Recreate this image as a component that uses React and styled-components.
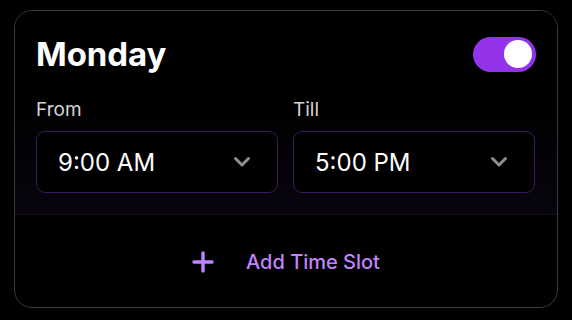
import React, { useState } from "react";
import styled, { createGlobalStyle } from "styled-components";

const Global = createGlobalStyle`
  html, body { margin: 0; padding: 0; background: #000; }
  body { font-family: Inter, "Noto Sans", sans-serif; -webkit-font-smoothing: antialiased; }
`;

const Page = styled.div`
  width: 572px;
  height: 320px;
  padding: 10px 14px 12px 14px;
  box-sizing: border-box;
  background: #000;
`;

const Card = styled.div`
  height: 100%;
  box-sizing: border-box;
  border: 1px solid #3b3a42;
  border-radius: 18px;
  overflow: hidden;
  display: flex;
  flex-direction: column;
  background: #000;
`;

const Top = styled.div`
  padding: 25px 22px 21px 21px;
  background: linear-gradient(180deg, #000 0%, #000 45%, #08040e 100%);
  border-bottom: 1px dotted #2a1a3a;
  display: flex;
  flex-direction: column;
`;

const Header = styled.div`
  display: flex;
  align-items: center;
  justify-content: space-between;
  height: 36px;
`;

const Title = styled.h1`
  margin: 0;
  color: #fff;
  font-size: 33px;
  line-height: 36px;
  font-weight: 700;
  letter-spacing: -0.1px;
`;

const Switch = styled.button`
  width: 63px;
  height: 35px;
  border-radius: 18px;
  border: none;
  padding: 0 4px;
  margin-right: -1px;
  background: ${p => (p.$on ? "#9333ea" : "#3f3f46")};
  display: flex;
  align-items: center;
  justify-content: ${p => (p.$on ? "flex-end" : "flex-start")};
  cursor: pointer;
`;

const Knob = styled.span`
  width: 28px;
  height: 28px;
  border-radius: 50%;
  background: #fff;
`;

const Fields = styled.div`
  display: grid;
  grid-template-columns: 1fr 1fr;
  column-gap: 15px;
  margin-top: 27px;
`;

const Field = styled.div`
  display: flex;
  flex-direction: column;
`;

const Label = styled.div`
  color: #d4d4d8;
  font-size: 19px;
  line-height: 22px;
  margin-bottom: 10px;
`;

const Select = styled.div`
  height: 62px;
  box-sizing: border-box;
  border: 1px solid #3a1c5e;
  border-radius: 9px;
  background: #000;
  display: flex;
  align-items: center;
  justify-content: space-between;
  padding: 0 26px 0 21px;
  color: #fff;
  font-size: 24px;
  font-weight: 400;
`;

const Bottom = styled.div`
  flex: 1;
  display: flex;
  align-items: center;
  justify-content: center;
  gap: 32px;
  padding-top: 2px;
`;

const AddText = styled.span`
  color: #c084fc;
  font-size: 20px;
  font-weight: 500;
`;

const Chevron = () => (
  <svg width="18" height="12" viewBox="0 0 18 12" fill="none">
    <path d="M2.5 2.5 L9 9 L15.5 2.5" stroke="#8e8e93" strokeWidth="3" strokeLinecap="round" strokeLinejoin="round" />
  </svg>
);

const Plus = () => (
  <svg width="22" height="22" viewBox="0 0 22 22" fill="none">
    <path d="M11 2 V20 M2 11 H20" stroke="#c084fc" strokeWidth="3.4" strokeLinecap="round" />
  </svg>
);

export default function App() {
  const [on, setOn] = useState(true);
  return (
    <>
      <Global />
      <Page>
        <Card>
          <Top>
            <Header>
              <Title>Monday</Title>
              <Switch $on={on} onClick={() => setOn(!on)}>
                <Knob />
              </Switch>
            </Header>
            <Fields>
              <Field>
                <Label>From</Label>
                <Select>
                  <span>9:00 AM</span>
                  <Chevron />
                </Select>
              </Field>
              <Field>
                <Label>Till</Label>
                <Select>
                  <span>5:00 PM</span>
                  <Chevron />
                </Select>
              </Field>
            </Fields>
          </Top>
          <Bottom>
            <Plus />
            <AddText>Add Time Slot</AddText>
          </Bottom>
        </Card>
      </Page>
    </>
  );
}
